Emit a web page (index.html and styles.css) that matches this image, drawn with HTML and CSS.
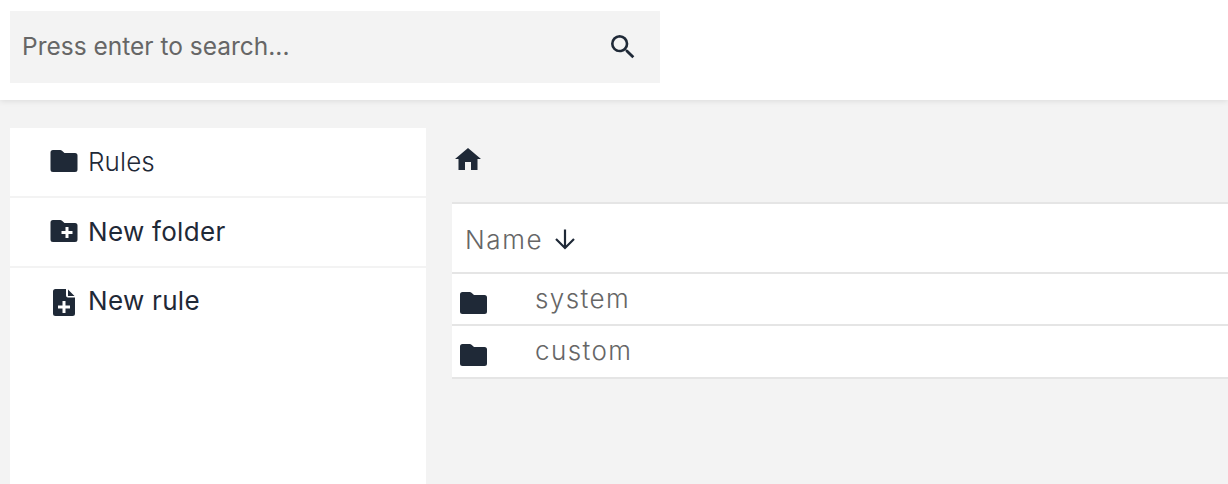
FILE: index.html
```html
<!DOCTYPE html>
<html lang="en">
<head>
<meta charset="utf-8">
<title>Rules</title>
<link rel="stylesheet" href="styles.css">
</head>
<body>
<header class="topbar">
  <div class="search">
    <span class="search-text">Press enter to search...</span>
    <svg class="search-icon" viewBox="0 0 24 24"><path d="M15.5 14h-.79l-.28-.27A6.47 6.47 0 0 0 16 9.5 6.5 6.5 0 1 0 9.5 16c1.61 0 3.09-.59 4.23-1.57l.27.28v.79l5 4.99L20.49 19l-4.99-5zm-6 0C7.01 14 5 11.99 5 9.5S7.01 5 9.5 5 14 7.01 14 9.5 11.99 14 9.5 14z"/></svg>
  </div>
</header>
<main class="layout">
  <nav class="sidebar">
    <div class="side-row side-muted">
      <svg class="side-icon" viewBox="0 0 27 22"><path d="M2.5 0h7.2c.7 0 1.3.3 1.8.7L14 3h10.500A2.500 2.500 0 0 1 27 5.500v14a2.500 2.500 0 0 1-2.500 2.500h-22A2.500 2.500 0 0 1 0 19.500v-17A2.500 2.500 0 0 1 2.500 0z"/></svg>
      <span>Rules</span>
    </div>
    <div class="side-row">
      <svg class="side-icon" viewBox="0 0 27 22"><path fill-rule="evenodd" d="M2.500 0h7.200c.7 0 1.300.3 1.800.7L14 3h10.500A2.500 2.500 0 0 1 27 5.500v14a2.500 2.500 0 0 1-2.500 2.500h-22A2.500 2.500 0 0 1 0 19.500v-17A2.500 2.500 0 0 1 2.500 0zM15 7h3v4h4v3h-4v4h-3v-4h-4v-3h4z"/></svg>
      <span>New folder</span>
    </div>
    <div class="side-row side-last">
      <svg class="side-icon side-icon-file" viewBox="0 0 22 27"><path fill-rule="evenodd" d="M2.500 0H13v6.500A2 2 0 0 0 15 8.500h7v16a2.500 2.500 0 0 1-2.500 2.500h-17A2.500 2.500 0 0 1 0 24.500v-22A2.500 2.500 0 0 1 2.500 0zM15 .5 21.500 7H15zM9.500 12h3v4.500H17v3h-4.500V24h-3v-4.500H5v-3h4.500z"/></svg>
      <span>New rule</span>
    </div>
  </nav>
  <section class="content">
    <div class="crumbs">
      <svg class="home-icon" viewBox="0 0 26 22"><path d="M10 22v-8h6v8h6.500V11H26L13 0 0 11h3.500v11z"/></svg>
    </div>
    <div class="table">
      <div class="table-head">
        <span>Name</span>
        <svg class="arrow-icon" viewBox="0 0 24 24"><path d="M12 2.500v18M3 12l9 9 9-9"/></svg>
      </div>
      <div class="table-row">
        <svg class="row-icon" viewBox="0 0 27 22"><path d="M2.500 0h7.200c.7 0 1.300.3 1.800.7L14 3h10.500A2.500 2.500 0 0 1 27 5.500v14a2.500 2.500 0 0 1-2.500 2.500h-22A2.500 2.500 0 0 1 0 19.500v-17A2.500 2.500 0 0 1 2.500 0z"/></svg>
        <span class="row-name">system</span>
      </div>
      <div class="table-row">
        <svg class="row-icon" viewBox="0 0 27 22"><path d="M2.500 0h7.200c.7 0 1.300.3 1.800.7L14 3h10.500A2.500 2.500 0 0 1 27 5.500v14a2.500 2.500 0 0 1-2.500 2.500h-22A2.500 2.500 0 0 1 0 19.500v-17A2.500 2.500 0 0 1 2.500 0z"/></svg>
        <span class="row-name">custom</span>
      </div>
    </div>
  </section>
</main>
</body>
</html>
```
FILE: styles.css
```css
* { box-sizing: border-box; }
html, body { margin: 0; height: 100%; overflow: hidden; }
body {
  background: #f3f3f3;
  font-family: "Inter", "Liberation Sans", sans-serif;
  font-size: 26px;
  color: #1f2937;
}
.topbar {
  height: 100px;
  background: #fff;
  padding: 11px 0 0 10px;
  box-shadow: 0 1px 6px rgba(0, 0, 0, 0.1);
  position: relative;
}
.search {
  width: 650px;
  height: 72px;
  background: #f3f3f3;
  display: flex;
  align-items: center;
  justify-content: space-between;
  padding: 0 21px 2px 12px;
}
.search-text { color: #666; font-size: 24.500px; }
.search-icon { width: 32px; height: 32px; fill: #1f2937; margin-top: 2px; }
.layout {
  display: flex;
  align-items: flex-start;
  padding: 28px 0 0 10px;
}
.sidebar {
  width: 416px;
  height: 356px;
  background: #fff;
  flex: none;
}
.side-row {
  height: 70px;
  display: flex;
  align-items: center;
  padding: 0 0 2px 40px;
  gap: 10px;
  border-bottom: 2px solid #f3f3f3;
  letter-spacing: 0.3px;
}
.side-muted { font-weight: 300; letter-spacing: 0.1px; }
.side-last { border-bottom: 0; padding-bottom: 5px; }
.side-icon { width: 28px; height: 22px; fill: #1f2937; flex: none; }
.side-icon-file { height: 27px; margin-top: 4px; }
.content { flex: 1; padding-left: 26px; min-width: 0; }
.crumbs { height: 74px; padding: 20px 0 0 3px; }
.home-icon { width: 26px; height: 22px; fill: #1f2937; display: block; }
.table { background: #fff; border-top: 2px solid #e5e5e5; }
.table-head {
  height: 70px;
  display: flex;
  align-items: center;
  gap: 10px;
  padding: 2px 0 0 13px;
  color: #666;
  font-weight: 300;
  letter-spacing: 1.600px;
  border-bottom: 2px solid #e5e5e5;
}
.arrow-icon { width: 24px; height: 24px; fill: none; stroke: #1f2937; stroke-width: 2.200; }
.table-row {
  height: 52px;
  display: flex;
  align-items: center;
  padding-left: 8px;
  border-bottom: 2px solid #e5e5e5;
  color: #666;
  font-weight: 300;
  letter-spacing: 1.400px;
}
.table-row:last-child { height: 53px; }
.row-icon { width: 27px; height: 22px; fill: #1f2937; flex: none; margin-top: 8px; }
.table-row:last-child .row-icon { margin-top: 7px; }
.row-name { margin-left: 48px; margin-top: -2px; }
```
